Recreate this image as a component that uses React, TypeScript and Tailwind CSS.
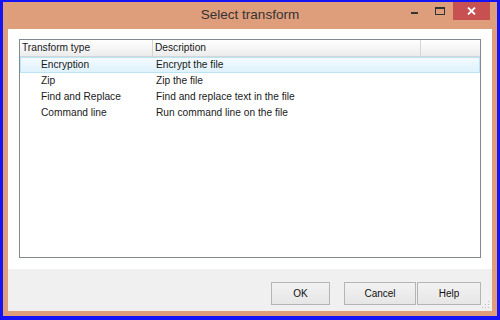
const rows = [
  { name: "Encryption", desc: "Encrypt the file" },
  { name: "Zip", desc: "Zip the file" },
  { name: "Find and Replace", desc: "Find and replace text in the file" },
  { name: "Command line", desc: "Run command line on the file" },
];

function WinButton({ label, w }: { label: string; w: string }) {
  return (
    <button
      className={`${w} h-[23px] border border-[#b4b4b4] bg-gradient-to-b from-[#f2f2f2] to-[#e6e6e6] text-[10px] text-[#111]`}
    >
      {label}
    </button>
  );
}

export default function App() {
  return (
    <div
      className="w-[500px] h-[320px] bg-[#1414f4] pt-[2px] pl-[3px] pr-[3px] pb-[4px]"
      style={{ fontFamily: '"Liberation Sans", Arial, sans-serif' }}
    >
      <div className="flex h-full flex-col bg-[#df9e7b]">
        {/* title bar */}
        <div className="relative flex h-[27px] shrink-0 items-center justify-center">
          <span className="text-[13.5px] text-[#333]">Select transform</span>
          <div className="absolute right-[7px] top-0 flex h-[18px] items-start">
            <div className="flex h-[18px] w-[26px] items-center justify-center">
              <div className="mt-[4px] h-[2px] w-[7px] bg-[#333]" />
            </div>
            <div className="flex h-[18px] w-[26px] items-center justify-center">
              <div className="h-[8px] w-[10px] border border-t-2 border-[#333]" />
            </div>
            <div className="flex h-[18px] w-[37px] items-center justify-center bg-[#c75050]">
              <svg width="9" height="8" viewBox="0 0 9 8">
                <path d="M1 0.5 L8 7.5 M8 0.5 L1 7.5" stroke="#fff" strokeWidth="1.8" />
              </svg>
            </div>
          </div>
        </div>

        {/* client area */}
        <div className="mx-[5px] mb-[5px] flex flex-1 flex-col bg-white">
          <div className="px-[11px] pt-[10px] pb-[11px]">
            <div className="h-[219px] border border-[#828790] bg-white text-[10.2px] text-[#1a1a1a]">
              <div className="flex h-[17px] items-stretch border-b border-[#d5d5d5] bg-gradient-to-b from-white to-[#ececec]">
                <div className="flex w-[133px] items-center border-r border-[#d5d5d5] pl-[2px]">
                  Transform type
                </div>
                <div className="flex w-[268px] items-center border-r border-[#d5d5d5] pl-[2px]">
                  Description
                </div>
                <div className="flex-1" />
              </div>
              {rows.map((r, i) => (
                <div
                  key={r.name}
                  className={
                    i === 0
                      ? "flex h-[16px] items-center border border-[#b8e4f6] bg-gradient-to-b from-[#f3fafe] to-[#dff2fc]"
                      : "flex h-[16px] items-center border border-transparent"
                  }
                >
                  <div className="w-[132px] pl-[20px]">{r.name}</div>
                  <div className="pl-[3px]">{r.desc}</div>
                </div>
              ))}
            </div>
          </div>
          <div className="relative flex flex-1 items-start justify-end bg-[#f0f0f0] pr-[11px] pt-[13px]">
            <WinButton label="OK" w="w-[59px]" />
            <div className="ml-[14px] flex">
              <WinButton label="Cancel" w="w-[72px]" />
              <div className="w-[1px]" />
              <WinButton label="Help" w="w-[64px]" />
            </div>
            <svg className="absolute bottom-[2px] right-[2px]" width="10" height="10" viewBox="0 0 10 10">
              <rect x="8" y="2" width="1" height="1" fill="#bcbcbc" />
              <rect x="5" y="5" width="1" height="1" fill="#bcbcbc" />
              <rect x="8" y="5" width="1" height="1" fill="#bcbcbc" />
              <rect x="2" y="8" width="1" height="1" fill="#bcbcbc" />
              <rect x="5" y="8" width="1" height="1" fill="#bcbcbc" />
              <rect x="8" y="8" width="1" height="1" fill="#bcbcbc" />
            </svg>
          </div>
        </div>
      </div>
    </div>
  );
}
